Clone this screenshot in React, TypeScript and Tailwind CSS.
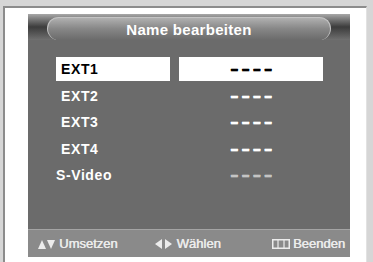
import React from 'react';

const rows = [
  { name: 'EXT1', value: '––––', active: true },
  { name: 'EXT2', value: '––––' },
  { name: 'EXT3', value: '––––' },
  { name: 'EXT4', value: '––––' },
  { name: 'S-Video', value: '––––', dim: true },
];

function UpDown() {
  return (
    <svg width="18" height="10" viewBox="0 0 18 10" className="shrink-0">
      <polygon points="0,10 4,1 8,10" fill="#ececec" />
      <polygon points="9,1 17,1 13,10" fill="#ececec" />
    </svg>
  );
}

function LeftRight() {
  return (
    <svg width="20" height="10" viewBox="0 0 20 10" className="shrink-0">
      <polygon points="8,0 8,10 1,5" fill="#ececec" />
      <polygon points="11,0 11,10 18,5" fill="#ececec" />
    </svg>
  );
}

function MenuKey() {
  return (
    <svg width="18" height="10" viewBox="0 0 18 10" className="shrink-0">
      <rect x="0.75" y="0.75" width="16.5" height="8.5" fill="none" stroke="#ececec" strokeWidth="1.5" />
      <line x1="6" y1="1" x2="6" y2="9" stroke="#ececec" strokeWidth="1.2" />
      <line x1="12" y1="1" x2="12" y2="9" stroke="#ececec" strokeWidth="1.2" />
    </svg>
  );
}

export default function App() {
  return (
    <div
      className="w-[373px] h-[262px] bg-[#d6d6d6] pt-[6px] pl-[3px] overflow-hidden"
      style={{ fontFamily: '"Liberation Sans", Arial, sans-serif' }}
    >
      <div className="h-[256px] bg-white border-l-2 border-t-2 border-[#8c8c8c] border-r border-r-[#e2e2e2] w-[364px] pl-[23px] pt-[6px]">
        <div className="w-[322px] h-[243px] flex flex-col bg-[#6b6b6b]">
          {/* Title */}
          <div className="h-[26px] shrink-0 bg-gradient-to-b from-[#a8a8a8] via-[#3c3c3c] to-[#707070] px-[19px] pt-[3px]">
            <div className="h-[23px] rounded-full bg-gradient-to-b from-[#b0b0b0] via-[#868686] to-[#6b6b6b] border-t border-x border-[#c4c4c4] flex items-center justify-center">
              <span className="text-white font-bold text-[15px] tracking-[0.3px] leading-none">Name bearbeiten</span>
            </div>
          </div>

          {/* Rows */}
          <div className="flex-1 pt-[16px] pl-[28px]">
            {rows.map((row) => (
              <div key={row.name} className="h-[26.5px] flex items-center gap-[9px]">
                <div
                  className={
                    row.active
                      ? 'w-[114px] h-[24px] bg-white flex items-center pl-[5px]'
                      : 'w-[114px] h-[24px] flex items-center pl-[5px]'
                  }
                >
                  <span
                    className={
                      (row.active ? 'text-black ' : 'text-white ') +
                      (row.name === 'S-Video' ? '-ml-[5px] ' : '') +
                      'font-bold text-[14px] tracking-[0.6px] leading-none'
                    }
                  >
                    {row.name}
                  </span>
                </div>
                <div
                  className={
                    row.active
                      ? 'w-[144px] h-[24px] bg-white flex items-center justify-center'
                      : 'w-[144px] h-[24px] flex items-center justify-center'
                  }
                >
                  <span
                    className={
                      (row.active ? 'text-black' : row.dim ? 'text-[#c4c4c4]' : 'text-white') +
                      ' font-bold text-[14px] tracking-[3.5px] leading-none pl-[4px] [text-shadow:0_1px_0_currentColor,0_-0.5px_0_currentColor]'
                    }
                  >
                    {row.value}
                  </span>
                </div>
              </div>
            ))}
          </div>

          {/* Footer */}
          <div className="h-[28px] shrink-0 bg-[#8a8a8a] border-t border-[#a4a4a4] flex items-center pl-[10px] pr-[5px] text-[#ececec] text-[13px] leading-none [text-shadow:0.5px_0_0_currentColor]">
            <div className="flex items-center gap-[3px]">
              <UpDown />
              <span>Umsetzen</span>
            </div>
            <div className="flex items-center gap-[3px] ml-[36px]">
              <LeftRight />
              <span>Wählen</span>
            </div>
            <div className="flex items-center gap-[3px] ml-auto">
              <MenuKey />
              <span>Beenden</span>
            </div>
          </div>
        </div>
      </div>
    </div>
  );
}
